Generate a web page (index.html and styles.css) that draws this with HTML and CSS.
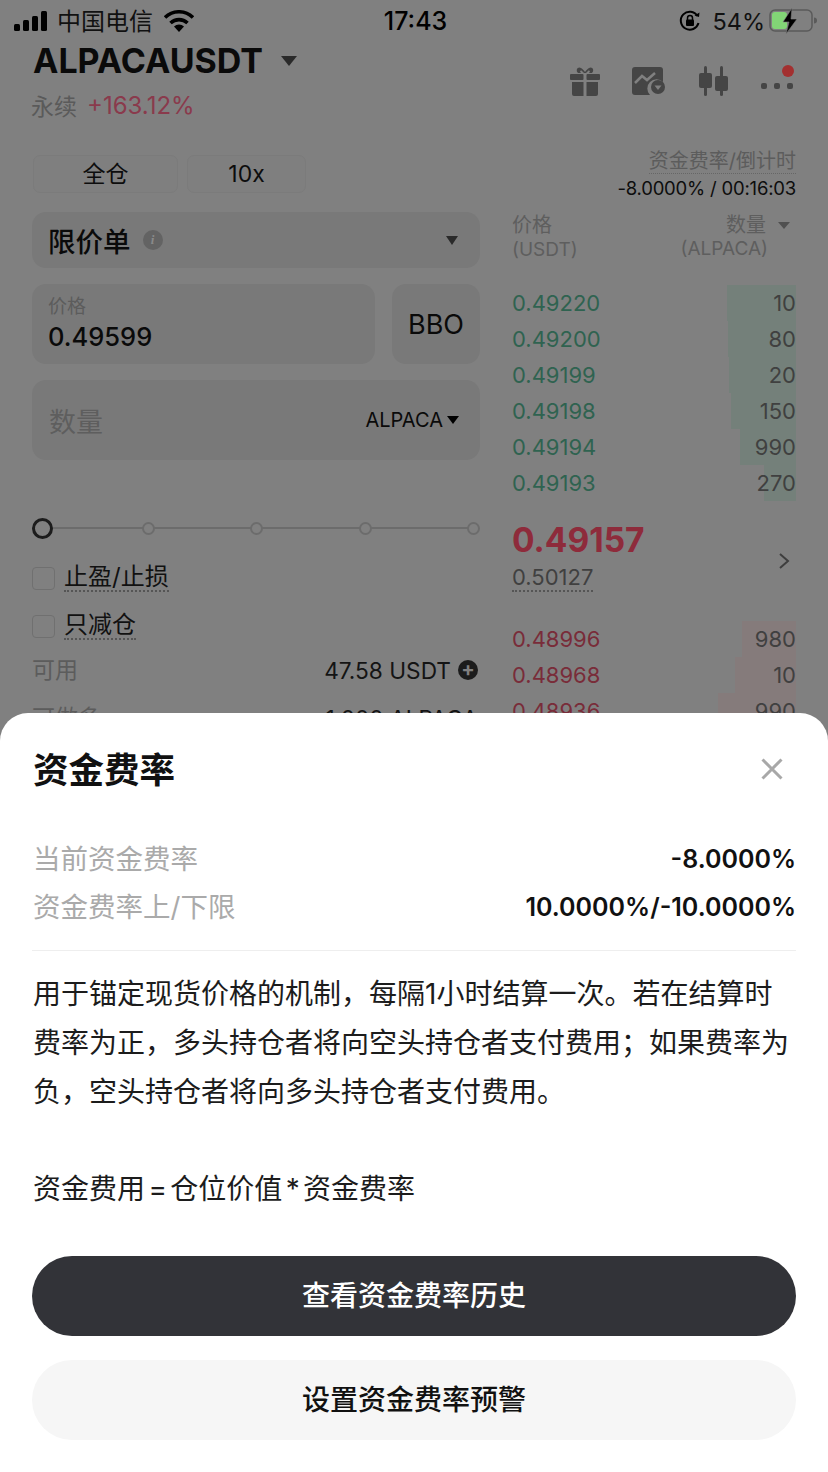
FILE: index.html
```html
<!DOCTYPE html>
<html lang="zh-CN">
<head>
    <meta charset="UTF-8">
    <meta name="viewport" content="width=device-width, initial-scale=1.0">
    <title>资金费率</title>
    <link rel="stylesheet" href="styles.css">
</head>
<body>
    <div class="screen">
        <!-- Status bar -->
        <div class="status-bar">
            <div class="status-side">
                <svg class="signal" width="35" height="20" viewBox="0 0 35 20"><rect x="0" y="13" width="6" height="7" rx="1.5"/><rect x="9" y="9" width="6" height="11" rx="1.5"/><rect x="18" y="5" width="6" height="15" rx="1.5"/><rect x="27" y="0" width="6" height="20" rx="1.5"/></svg>
                <span class="carrier">中国电信</span>
                <svg class="wifi" width="30" height="22" viewBox="0 0 30 22"><path d="M1 7.5a20 20 0 0 1 28 0" fill="none" stroke="#000" stroke-width="3.6"/><path d="M6.500 13a12.500 12.500 0 0 1 17 0" fill="none" stroke="#000" stroke-width="3.600"/><path d="M15 22l-5-5.500a7.500 7.500 0 0 1 10 0z"/></svg>
            </div>
            <div class="status-time">17:43</div>
            <div class="status-side status-right">
                <svg class="lock" width="24" height="24" viewBox="0 0 24 24"><path d="M20.500 14a9 9 0 1 1-1-7" fill="none" stroke="#000" stroke-width="2"/><path d="M16.500 6.500l4.500 1.500 .5-4.500z"/><rect x="8" y="10.500" width="8" height="6.500" rx="1"/><path d="M9.500 11V9a2.500 2.500 0 0 1 5 0v2" fill="none" stroke="#000" stroke-width="1.500"/></svg>
                <span class="battery-text">54%</span>
                <svg class="battery" width="48" height="26" viewBox="0 0 48 26"><rect x="1" y="2" width="42" height="21" rx="5" fill="none" stroke="#5a5a5a" stroke-width="1.500"/><rect x="3" y="4" width="15" height="17" rx="3" fill="#82d576"/><path d="M45 9.500v6a3 3 0 0 0 0-6z" fill="#5a5a5a"/><path d="M23 0L14 14h6L17 26 28 11h-6z" fill="#000" stroke="#808080" stroke-width=".6"/></svg>
            </div>
        </div>

        <!-- Header -->
        <header class="top">
            <div class="top-title">
                <div class="symbol-row">
                    <h1 class="symbol">ALPACAUSDT</h1>
                    <span class="caret caret-lg"></span>
                </div>
                <div class="sub-row"><span class="sub-label">永续</span><span class="sub-change">+163.12%</span></div>
            </div>
            <div class="top-icons">
                <svg width="30" height="30" viewBox="0 0 30 30" fill="#454545"><path d="M8 7c-3-3 0-7 3-5 2 1 3 3 4 4 1-1 2-3 4-4 3-2 6 2 3 5h-3c2-2 0-3-1-2l-2 2h-2l-2-2c-1-1-3 0-1 2z"/><rect x="0" y="8" width="13.500" height="6" rx="1"/><rect x="16.500" y="8" width="13.500" height="6" rx="1"/><path d="M2 16h11.500v14H4a2 2 0 0 1-2-2zM16.500 16H28v12a2 2 0 0 1-2 2h-9.500z"/></svg>
                <svg width="34" height="28" viewBox="0 0 34 28"><path d="M3 0h25a3 3 0 0 1 3 3v12a9 9 0 0 0-13 13H3a3 3 0 0 1-3-3V3a3 3 0 0 1 3-3z" fill="#454545"/><path d="M3 16l7-7 5 4 8-7" fill="none" stroke="#808080" stroke-width="2.500"/><circle cx="26" cy="20" r="7" fill="#454545"/><path d="M22.500 18.500h7L26 23z" fill="#808080"/></svg>
                <svg width="31" height="30" viewBox="0 0 31 30" fill="#454545"><rect x="6" y="0" width="3" height="30" rx="1.500"/><rect x="1" y="7" width="13" height="15" rx="2"/><rect x="22" y="0" width="3" height="30" rx="1.500"/><rect x="17" y="10" width="13" height="15" rx="2"/></svg>
                <div class="more"><i></i><i></i><i></i><b></b></div>
            </div>
        </header>

        <!-- Trade panel -->
        <div class="trade">
            <div class="trade-left">
                <div class="margin-row">
                    <div class="margin-btn margin-cross">全仓</div>
                    <div class="margin-btn margin-lev">10x</div>
                </div>
                <div class="box select-box">
                    <span class="select-label">限价单</span>
                    <span class="info">i</span>
                    <span class="caret caret-end"></span>
                </div>
                <div class="price-row">
                    <div class="box price-box">
                        <span class="price-label">价格</span>
                        <span class="price-value">0.49599</span>
                    </div>
                    <div class="box bbo">BBO</div>
                </div>
                <div class="box qty-box">
                    <span class="qty-label">数量</span>
                    <span class="qty-unit">ALPACA<span class="caret caret-sm"></span></span>
                </div>
                <div class="slider">
                    <span class="slider-start"></span>
                    <span class="slider-node"></span>
                    <span class="slider-node"></span>
                    <span class="slider-node"></span>
                    <span class="slider-node"></span>
                </div>
                <label class="check-row check-first"><span class="check"></span><span class="dotted">止盈/止损</span></label>
                <label class="check-row"><span class="check"></span><span class="dotted">只减仓</span></label>
                <div class="info-row info-first"><span class="info-key">可用</span><span class="info-val">47.58 USDT<span class="plus"></span></span></div>
                <div class="info-row info-last"><span class="info-key">可做多</span><span class="info-val">1,000 ALPACA</span></div>
            </div>

            <div class="trade-right">
                <div class="funding">
                    <span class="funding-label">资金费率/倒计时</span>
                    <span class="funding-value">-8.0000% / 00:16:03</span>
                </div>
                <div class="book-head">
                    <div class="book-head-price"><span class="head-cjk">价格</span><br>(USDT)</div>
                    <div class="book-head-qty"><span class="book-qty-top head-cjk">数量<span class="caret caret-xs"></span></span><span class="book-qty-unit">(ALPACA)</span></div>
                </div>
                <div class="book-list">
                    <div class="book-row ask"><i style="width:69px"></i><span>0.49220</span><span>10</span></div>
                    <div class="book-row ask"><i style="width:68px"></i><span>0.49200</span><span>80</span></div>
                    <div class="book-row ask"><i style="width:67px"></i><span>0.49199</span><span>20</span></div>
                    <div class="book-row ask"><i style="width:65px"></i><span>0.49198</span><span>150</span></div>
                    <div class="book-row ask"><i style="width:56px"></i><span>0.49194</span><span>990</span></div>
                    <div class="book-row ask"><i style="width:32px"></i><span>0.49193</span><span>270</span></div>
                </div>
                <div class="last-price">
                    <div class="last-left">
                        <div class="last-main">0.49157</div>
                        <div class="last-mark"><span class="dotted">0.50127</span></div>
                    </div>
                    <svg width="12" height="18" viewBox="0 0 12 18"><path d="M2 2l8 7-8 7" fill="none" stroke="#3e3e3e" stroke-width="2"/></svg>
                </div>
                <div class="book-list">
                    <div class="book-row bid"><i style="width:54px"></i><span>0.48996</span><span>980</span></div>
                    <div class="book-row bid"><i style="width:61px"></i><span>0.48968</span><span>10</span></div>
                    <div class="book-row bid"><i style="width:78px"></i><span>0.48936</span><span>990</span></div>
                </div>
            </div>
        </div>

        <!-- Funding rate sheet -->
        <section class="sheet">
            <div class="sheet-head">
                <h2>资金费率</h2>
                <svg width="24" height="24" viewBox="0 0 24 24"><path d="M2.500 2.500l19 19M21.500 2.500l-19 19" fill="none" stroke="#a8a8a8" stroke-width="3"/></svg>
            </div>
            <div class="sheet-rows">
                <div class="sheet-row"><span>当前资金费率</span><strong>-8.0000%</strong></div>
                <div class="sheet-row"><span>资金费率上/下限</span><strong>10.0000%/-10.0000%</strong></div>
            </div>
            <div class="sheet-text">
                <p>用于锚定现货价格的机制，每隔1小时结算一次。若在结算时费率为正，多头持仓者将向空头持仓者支付费用；如果费率为负，空头持仓者将向多头持仓者支付费用。</p>
                <p class="formula">资金费用 = 仓位价值 * 资金费率</p>
            </div>
            <div class="sheet-btn btn-dark">查看资金费率历史</div>
            <div class="sheet-btn btn-light">设置资金费率预警</div>
        </section>
    </div>
</body>
</html>
```

FILE: styles.css
```css
:root {
    --dim-bg: #808080;
    --dim-box: #797979;
    --dim-text: #5a5a5a;
    --green: #2f6350;
    --green-bar: #74807a;
    --red: #792c39;
    --red-bar: #857b7b;
}

* {
    box-sizing: border-box;
}

body {
    margin: 0;
    background-color: var(--dim-bg);
    color: #000;
    font-family: Inter, "Noto Sans CJK SC", sans-serif;
}

.screen {
    position: relative;
    width: 828px;
    height: 1472px;
    overflow: hidden;
}

/* status bar */
.status-bar {
    display: flex;
    justify-content: space-between;
    align-items: center;
    height: 42px;
    padding: 0 11px 0 14px;
}

.status-side {
    display: flex;
    align-items: center;
    width: 300px;
}

.status-right {
    justify-content: flex-end;
}

.carrier {
    margin: 0 11px 4px 8px;
    font-size: 24px;
    color: #111;
}

.status-time {
    font-size: 25px;
    font-weight: 500;
}

.lock {
    margin-right: 10px;
}

.battery-text {
    margin-right: 4px;
    font-size: 23.500px;
    color: #111;
}

/* header */
.top {
    display: flex;
    justify-content: space-between;
    height: 108px;
    padding: 0 32px 0 32px;
}

.symbol-row {
    display: flex;
    align-items: center;
    height: 38px;
}

.symbol {
    margin: 0 0 0 1px;
    font-size: 34px;
    font-weight: 700;
    line-height: 38px;
    color: #0a0a0a;
}

.sub-row {
    display: flex;
    align-items: center;
    margin-top: 8px;
}

.sub-label {
    margin-left: -1px;
    font-size: 23px;
    color: var(--dim-text);
}

.sub-change {
    margin-left: 10px;
    font-size: 24px;
    color: #8a3a4c;
}

.top-icons {
    display: flex;
    align-items: center;
    gap: 32px;
    height: 66px;
    margin-top: 6px;
}

.more {
    position: relative;
    display: flex;
    gap: 7px;
    margin: 10px 3px 0 0;
}

.more i {
    width: 6px;
    height: 6px;
    border-radius: 2px;
    background-color: #454545;
}

.more b {
    position: absolute;
    top: -18px;
    right: -1px;
    width: 12px;
    height: 12px;
    border-radius: 50%;
    background-color: #a33030;
}

.caret {
    display: inline-block;
    border-style: solid;
    border-color: #2a2a2a transparent transparent;
}

.caret-lg {
    margin-left: 18px;
    border-width: 10px 8px 0;
}

.caret-end {
    margin-left: auto;
    margin-right: 22px;
    border-width: 9px 6.500px 0;
}

.caret-sm {
    margin-left: 4px;
    border-width: 8px 6px 0;
    border-top-color: #000;
    vertical-align: 3px;
}

.caret-xs {
    margin-left: 12px;
    border-width: 7px 6px 0;
    border-top-color: #505050;
    vertical-align: 3px;
}

/* trade panel */
.trade {
    display: flex;
    gap: 32px;
    padding: 0 32px;
}

.trade-left {
    width: 448px;
}

.margin-row {
    display: flex;
    gap: 9px;
    margin: 5px 0 19px 1px;
}

.margin-btn {
    height: 38px;
    border: 1px solid #7b7b7b;
    border-radius: 7px;
    background-color: #7f7f7f;
    font-size: 23px;
    line-height: 36px;
    text-align: center;
    color: #0d0d0d;
}

.margin-cross {
    width: 145px;
}

.margin-lev {
    width: 119px;
}

.box {
    border-radius: 14px;
    background-color: var(--dim-box);
}

.select-box {
    display: flex;
    align-items: center;
    height: 56px;
    padding-left: 16px;
}

.select-label {
    font-size: 27.500px;
    font-weight: 500;
    color: #0a0a0a;
}

.info {
    width: 20px;
    height: 20px;
    margin-left: 12px;
    border-radius: 50%;
    background-color: #636363;
    font: italic 700 13px/20px "Liberation Serif", serif;
    text-align: center;
    color: #8a8a8a;
}

.price-row {
    display: flex;
    justify-content: space-between;
    margin: 16px 0;
}

.price-box {
    display: flex;
    flex-direction: column;
    width: 343px;
    height: 80px;
    padding: 10px 16px 0;
}

.price-label {
    font-size: 19px;
    line-height: 26px;
    color: #5c5c5c;
}

.price-value {
    font-size: 25.500px;
    font-weight: 500;
    line-height: 34px;
    color: #0a0a0a;
}

.bbo {
    width: 88px;
    height: 80px;
    font-size: 27px;
    line-height: 82px;
    text-align: center;
    color: #0a0a0a;
}

.qty-box {
    display: flex;
    justify-content: space-between;
    align-items: center;
    height: 80px;
    padding: 0 21px 0 17px;
}

.qty-label {
    font-size: 27px;
    color: #5e5e5e;
}

.qty-unit {
    font-size: 20px;
    color: #0a0a0a;
}

.slider {
    position: relative;
    display: flex;
    justify-content: space-between;
    align-items: center;
    height: 24px;
    margin-top: 56px;
}

.slider::before {
    content: "";
    position: absolute;
    left: 0;
    right: 6px;
    height: 2px;
    background-color: #6c6c6c;
}

.slider-start {
    position: relative;
    width: 21px;
    height: 21px;
    margin-right: -7px;
    border: 3px solid #1c1c1c;
    border-radius: 50%;
    background-color: #808080;
}

.slider-node {
    position: relative;
    width: 13px;
    height: 13px;
    border: 2px solid #6c6c6c;
    border-radius: 50%;
    background-color: #808080;
}

.check-row {
    display: flex;
    align-items: center;
    height: 48px;
    font-size: 24px;
    color: #111;
}

.check-first {
    margin-top: 14px;
}

.check {
    width: 23px;
    height: 23px;
    margin-right: 9px;
    border: 1px solid #707070;
    border-radius: 4px;
}

.dotted {
    border-bottom: 2px dotted #555;
    line-height: 1.100;
}

.info-row {
    display: flex;
    justify-content: space-between;
    align-items: center;
    height: 44px;
    padding-right: 2px;
}

.info-first {
    margin-top: -4px;
}

.info-last {
    margin-top: 4px;
}

.info-key {
    font-size: 23px;
    color: #5c5c5c;
}

.info-val {
    display: flex;
    align-items: center;
    margin-top: 4px;
    font-size: 22.700px;
    color: #141414;
}

.plus {
    position: relative;
    width: 20px;
    height: 20px;
    margin-left: 7px;
    border-radius: 50%;
    background-color: #1c1c1c;
}

.plus::before {
    content: "+";
    position: absolute;
    inset: 0;
    font-size: 20px;
    font-weight: 700;
    line-height: 19px;
    text-align: center;
    color: #808080;
}

.trade-right {
    width: 284px;
    margin-top: -1px;
}

.funding {
    display: flex;
    flex-direction: column;
    align-items: flex-end;
    height: 64px;
}

.funding-label {
    border-bottom: 1px dotted #666;
    font-size: 20px;
    line-height: 24px;
    color: #5c5c5c;
}

.funding-value {
    margin-top: 2px;
    font-size: 18.500px;
    line-height: 24px;
    letter-spacing: -.2px;
    color: #0d0d0d;
}

.book-head {
    display: flex;
    justify-content: space-between;
    height: 72px;
    font-size: 19px;
    line-height: 24px;
    color: #5e5e5e;
}

.head-cjk {
    font-size: 20px;
}

.book-head-qty {
    display: flex;
    flex-direction: column;
    align-items: flex-end;
}

.book-qty-top {
    margin-right: 6px;
}

.book-qty-unit {
    margin-right: 28px;
}

.book-list {
    display: flex;
    flex-direction: column;
}

.book-row {
    position: relative;
    display: flex;
    justify-content: space-between;
    align-items: center;
    height: 36px;
    font-size: 22px;
    color: #404040;
}

.book-row span {
    position: relative;
}

.book-row i {
    position: absolute;
    top: 0;
    right: 0;
    bottom: 0;
}

.ask i {
    background-color: var(--green-bar);
}

.ask span:first-of-type {
    color: var(--green);
}

.bid i {
    background-color: var(--red-bar);
}

.bid span:first-of-type {
    color: var(--red);
}

.last-price {
    display: flex;
    justify-content: space-between;
    align-items: center;
    height: 120px;
    padding: 0 6px 0 0;
}

.last-left {
    padding-bottom: 13px;
}

.last-main {
    font-size: 33.500px;
    font-weight: 700;
    line-height: 40px;
    color: #8e2b3b;
}

.last-mark {
    margin-top: 4px;
    font-size: 22px;
    color: #404040;
}

/* funding sheet */
.sheet {
    position: absolute;
    left: 0;
    right: 0;
    bottom: 0;
    height: 759px;
    padding: 0 32px;
    border-radius: 28px 28px 0 0;
    background-color: #fff;
}

.sheet-head {
    display: flex;
    justify-content: space-between;
    align-items: center;
    height: 108px;
    margin-bottom: 12px;
    padding: 0 12px 0 1px;
}

.sheet-head svg {
    margin-top: 4px;
}

.sheet-head h2 {
    margin: 0;
    font-size: 35.500px;
    font-weight: 700;
    color: #111;
}

.sheet-rows {
    padding-bottom: 21px;
    border-bottom: 1px solid #eee;
}

.sheet-row {
    display: flex;
    justify-content: space-between;
    align-items: center;
    height: 48px;
    padding-left: 1px;
    font-size: 27.500px;
    color: #aaa;
}

.sheet-row strong {
    margin-top: 4px;
    font-size: 25px;
    font-weight: 600;
    color: #111;
}

.sheet-text {
    padding: 19px 0 0 1px;
    font-size: 28px;
    line-height: 49px;
    color: #1c1c1c;
}

.sheet-text p {
    margin: 0 0 48px;
}

.formula {
    word-spacing: -4.500px;
}

.sheet-btn {
    height: 80px;
    border-radius: 40px;
    font-size: 28px;
    font-weight: 500;
    line-height: 80px;
    text-align: center;
}

.btn-dark {
    margin-top: -6px;
    background-color: #323338;
    color: #fff;
}

.btn-light {
    margin-top: 24px;
    background-color: #f6f6f6;
    color: #111;
}
```
